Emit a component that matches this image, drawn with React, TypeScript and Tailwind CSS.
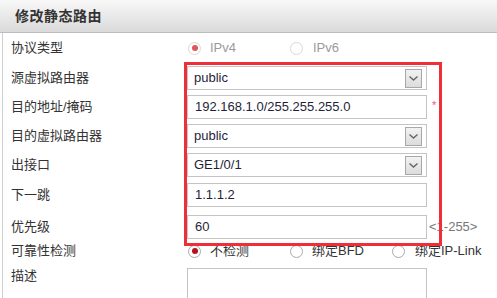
import React from 'react';

const LABEL_FONT = { fontFamily: '"Liberation Sans", Arial, "Noto Sans CJK SC", sans-serif' };

const Chevron = () => (
  <svg width="11" height="7" viewBox="0 0 11 7" fill="none">
    <path d="M1.5 1.5 L5.5 5 L9.5 1.5" stroke="#666" strokeWidth="1.4" />
  </svg>
);

const Radio = ({ checked, disabled }: { checked?: boolean; disabled?: boolean }) => (
  <span
    className={`w-[13px] h-[13px] rounded-full border flex items-center justify-center bg-white shrink-0 ${
      disabled ? 'border-[#d8d8d8]' : 'border-[#a9a9a9]'
    }`}
  >
    {checked && (
      <span className={`w-[6px] h-[6px] rounded-full ${disabled ? 'bg-[#e0565c]' : 'bg-[#b5121b]'}`} />
    )}
  </span>
);

const Label = ({ children }: { children: React.ReactNode }) => (
  <div className="w-[184px] pl-[8px] text-[13px] leading-[16px] text-[#333] shrink-0">{children}</div>
);

const Select = ({ value }: { value: string }) => (
  <div className="w-[240px] h-[24px] border border-[#c4c4c4] bg-white flex items-center justify-between pl-[6px] pr-[4px]">
    <span className="text-[13px] text-[#1f1f3a]">{value}</span>
    <span className="w-[17px] h-[19px] border border-[#a8a8a8] bg-gradient-to-b from-[#f2f2f2] to-[#dcdcdc] flex items-center justify-center">
      <Chevron />
    </span>
  </div>
);

const Input = ({ value }: { value: string }) => (
  <div className="w-[240px] h-[24px] border border-[#c4c4c4] bg-white flex items-center pl-[7px]">
    <span className="text-[13px] text-[#1f1f3a]">{value}</span>
  </div>
);

export default function App() {
  return (
    <div className="w-[497px] h-[298px] overflow-hidden bg-white relative" style={LABEL_FONT}>
      <div className="h-[33px] bg-gradient-to-b from-[#f8f8f8] to-[#dadada] border-b border-[#bdbdbd] flex items-center pl-[15px]">
        <span className="text-[14px] font-bold text-[#333] tracking-[0.5px]">修改静态路由</span>
      </div>

      <div className="ml-[2px] border-l border-[#cfcfcf] flex flex-col pb-[20px]">
        <div className="h-[30px] shrink-0 flex items-center">
          <Label>协议类型</Label>
          <div className="flex items-center">
            <div className="w-[102px] flex items-center gap-[9px] pl-[1px]">
              <Radio checked disabled />
              <span className="text-[13px] text-[#9a9a9a]">IPv4</span>
            </div>
            <div className="flex items-center gap-[10px] pl-[1px]">
              <Radio disabled />
              <span className="text-[13px] text-[#9a9a9a]">IPv6</span>
            </div>
          </div>
        </div>

        <div className="mt-[3px] shrink-0 flex items-center">
          <Label>源虚拟路由器</Label>
          <Select value="public" />
        </div>
        <div className="mt-[5px] shrink-0 flex items-center">
          <Label>目的地址/掩码</Label>
          <Input value="192.168.1.0/255.255.255.0" />
          <span className="ml-[5px] -mt-[4px] text-[11px] text-[#f0507a]">*</span>
        </div>
        <div className="mt-[5px] shrink-0 flex items-center">
          <Label>目的虚拟路由器</Label>
          <Select value="public" />
        </div>
        <div className="mt-[5px] shrink-0 flex items-center">
          <Label>出接口</Label>
          <Select value="GE1/0/1" />
        </div>
        <div className="mt-[6px] shrink-0 flex items-center">
          <Label>下一跳</Label>
          <Input value="1.1.1.2" />
        </div>
        <div className="mt-[8px] shrink-0 flex items-center">
          <Label>优先级</Label>
          <Input value="60" />
          <span className="ml-[2px] text-[13px] text-[#777]">&lt;1-255&gt;</span>
        </div>

        <div className="h-[24px] shrink-0 flex items-center">
          <Label>可靠性检测</Label>
          <div className="flex items-center">
            <div className="w-[102px] flex items-center gap-[9px] pl-[1px]">
              <Radio checked />
              <span className="text-[13px] text-[#333]">不检测</span>
            </div>
            <div className="w-[102px] flex items-center gap-[9px] pl-[1px]">
              <Radio />
              <span className="text-[13px] text-[#333]">绑定BFD</span>
            </div>
            <div className="flex items-center gap-[10px] pl-[1px]">
              <Radio />
              <span className="text-[13px] text-[#333]">绑定IP-Link</span>
            </div>
          </div>
        </div>

        <div className="mt-[5px] shrink-0 flex items-start">
          <Label>描述</Label>
          <div className="w-[240px] h-[50px] border border-[#c4c4c4] bg-white" />
        </div>
      </div>

      {/* red highlight annotation */}
      <div className="absolute left-[184px] top-[62px] w-[258px] h-[184px] border-[3px] border-[#ee2f38] pointer-events-none" />
    </div>
  );
}
